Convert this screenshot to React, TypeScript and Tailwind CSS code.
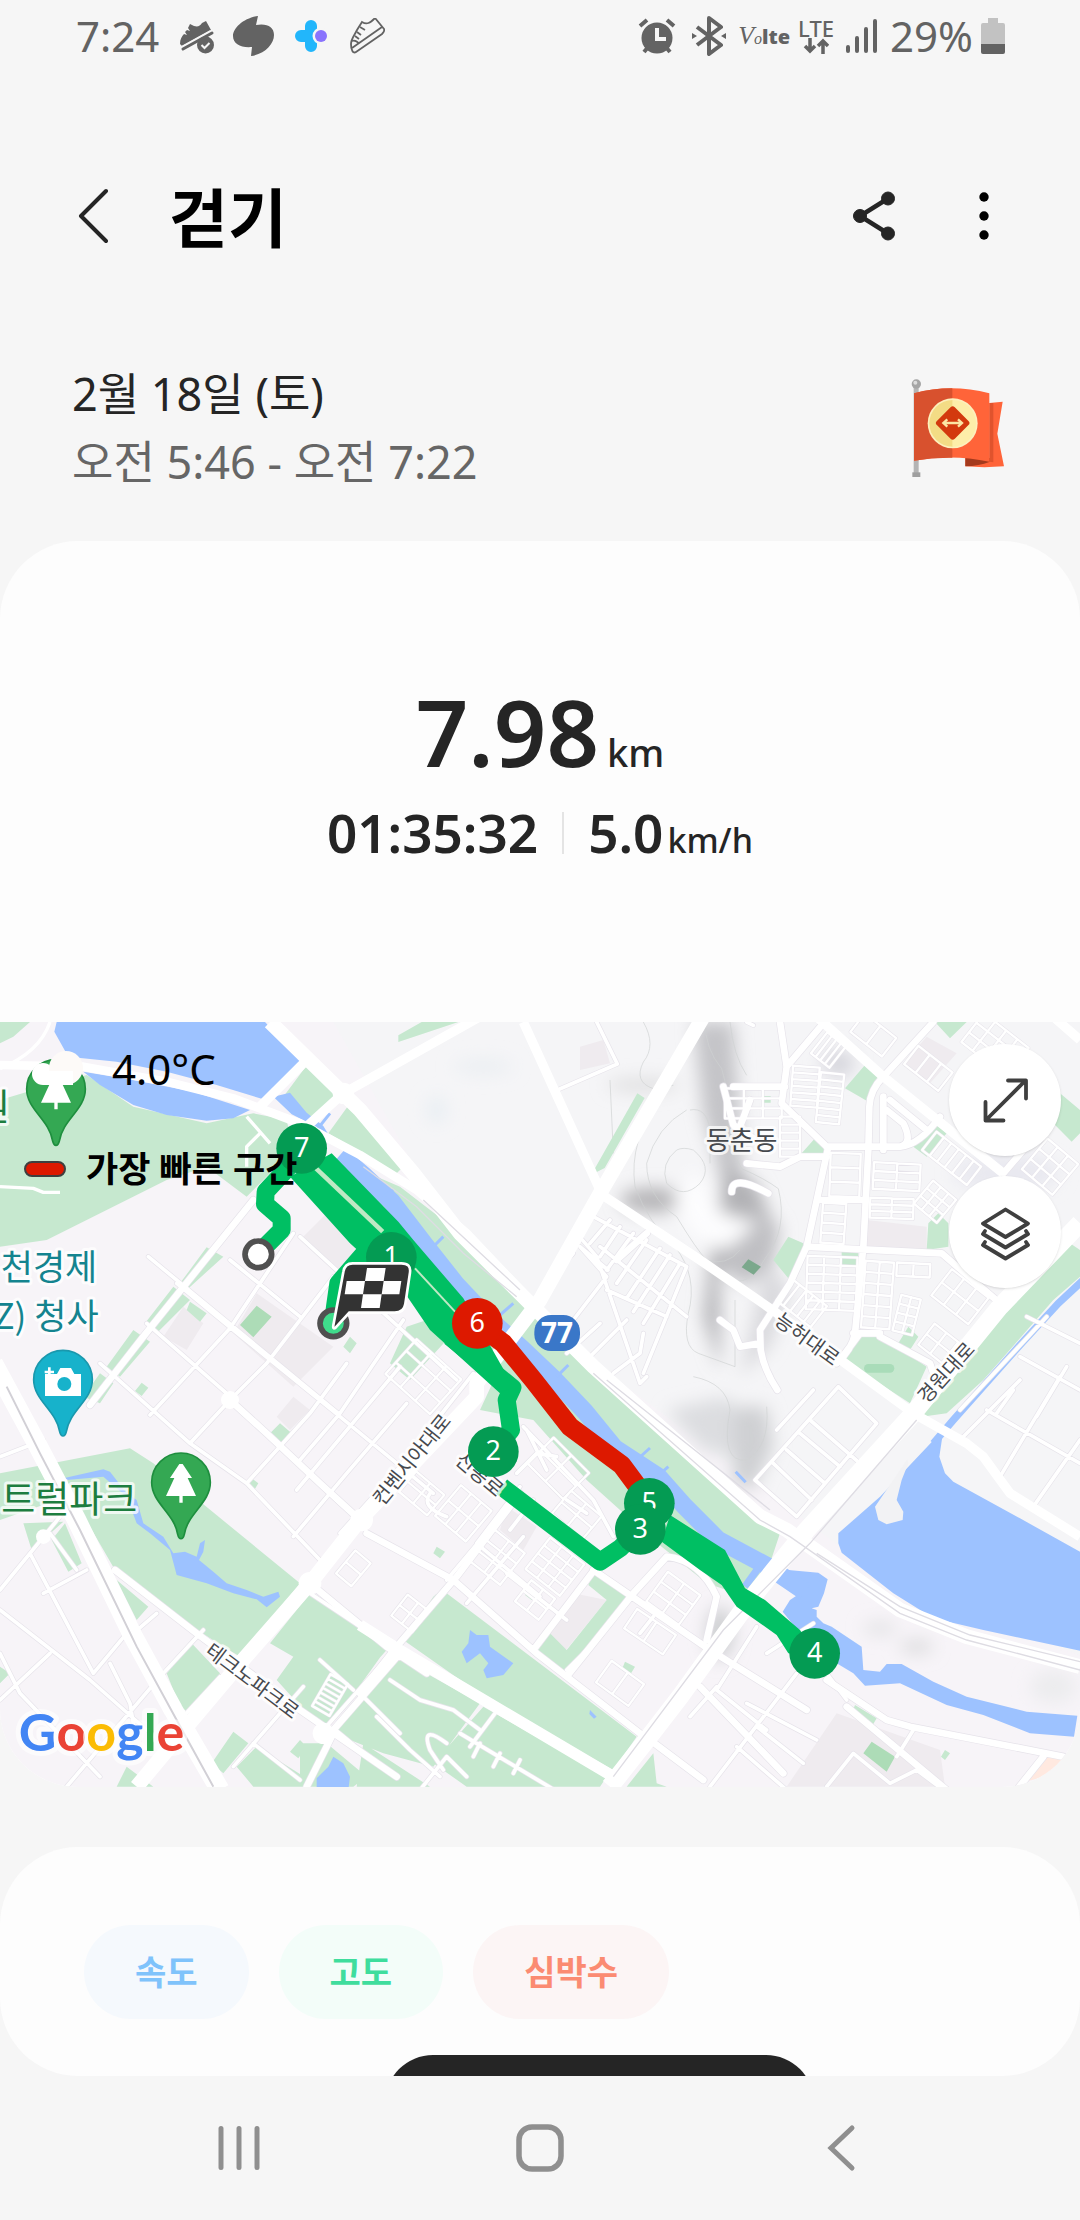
import type { ReactNode } from 'react'

const PARK = '#c6e8cf'
const WATER = '#9dc2ff'
const ROUTE = '#00bf63'
const MARKER = '#049b53'
const FAST = '#dd1900'

export default function App() {
  return (
    <div className="min-h-screen flex flex-col bg-[#f6f6f6] text-[#252525] font-['Noto_Sans','Noto_Sans_CJK_KR',sans-serif]">
      <StatusBar />
      <TitleBar />

      <section className="flex items-center justify-between mt-24 pl-[72px] pr-[73px] pb-[45px]">
        <div className="text-[45px] leading-[68px]">
          <p>2월 18일 (토)</p>
          <p className="text-[#666666]">오전 5:46 - 오전 7:22</p>
        </div>
        <FlagBadge />
      </section>

      <main>
        <section className="rounded-[78px] overflow-hidden bg-[#fdfdfd]">
          <Summary />
          <div className="relative">
            <RouteMap />
            <MapLegend />
            <div className="absolute top-[22px] right-[19px] flex flex-col gap-5">
              <MapButton label="지도 확대">
                <path d="M27 66 66 27M49 26.500h18v18M26.500 48v18.500h18" />
              </MapButton>
              <MapButton label="지도 레이어">
                <path d="M46.500 23.500 69 37.500 46.500 51 24 37.500z" />
                <path d="M26 45l-2 3 22.500 13.500L69 48l-2-3M26 56l-2 3 22.500 13.500L69 59l-2-3" />
              </MapButton>
            </div>
          </div>
        </section>

        <section className="relative mt-[60px] h-[229px] px-[84px] pt-[78px] rounded-[78px] overflow-hidden bg-[#fdfdfd]">
          <div className="flex gap-[30px]">
            <button className="h-[94px] px-[51px] rounded-full bg-[#f5f9fd] text-[#7fc3fb] text-[34px] font-bold">속도</button>
            <button className="h-[94px] px-[51px] rounded-full bg-[#f3fdf9] text-[#3fdd9d] text-[34px] font-bold">고도</button>
            <button className="h-[94px] px-[51px] rounded-full bg-[#fcf5f5] text-[#fb8b72] text-[34px] font-bold">심박수</button>
          </div>
          {/* top edge of the chart tooltip */}
          <div className="absolute left-[385px] top-[208px] w-[429px] h-24 rounded-full bg-[#252525]" />
        </section>
      </main>

      <NavBar />
    </div>
  )
}

function StatusBar() {
  return (
    <header className="flex items-center justify-between h-[72px] pl-[76px] pr-[75px] text-[42px] leading-[56px] text-[#636363]">
      <div className="flex items-center">
        <span>7:24</span>
        <svg className="ml-5 w-9 h-9" viewBox="0 0 36 36" fill="currentColor">
          <path d="M1 26c0-5 2-8 4-10l3 1-2-3 2-2 3 1-2-3 2-4 4 2c4 1 6 0 8-3l4-2 5 9L3 28z" />
          <path d="M4 31 33 15" stroke="#f6f6f6" strokeWidth="7" />
          <path d="M4 31 33 15" stroke="currentColor" strokeWidth="3" strokeLinecap="round" />
          <circle cx="26.500" cy="27" r="8.500" />
          <path d="m22.500 27 3 3 5-5" fill="none" stroke="#f6f6f6" strokeWidth="2" />
        </svg>
        <svg className="ml-4 w-[44px] h-[42px]" viewBox="0 0 44 42" fill="currentColor">
          <path d="M27 1c-14 2-25 12-25 20 0 8 8 12 19 11l-1 9c14-2 23-12 23-21 0-8-7-12-18-10z" />
        </svg>
        <svg className="ml-[18px] w-[36px] h-9" viewBox="0 0 36 36">
          <path d="M18 8v20M8 18h10" stroke="#22b6fb" strokeWidth="12" strokeLinecap="round" />
          <circle cx="28" cy="18" r="8.500" fill="#f6f6f6" />
          <circle cx="28" cy="18" r="6" fill="#8a73fd" />
        </svg>
        <svg className="ml-5 w-9 h-9" viewBox="0 0 36 36" fill="none" stroke="currentColor" strokeWidth="1.800">
          <path d="M2 26c0-5 3-8 6-14l5-8c5 3 8 1 13-4l9 11c1 2 0 3-2 5L7 34c-3 2-5-2-5-8z" />
          <path d="M3 30 33 9M3 23c3-1 5 0 7 3M8 14l4 3M11 9l5 3M6 18l4 3" />
        </svg>
      </div>

      <div className="flex items-center">
        <svg className="w-[38px] h-9" viewBox="0 0 38 36" fill="currentColor">
          <circle cx="19" cy="20" r="15.500" />
          <path d="m2 8 7-6M29 2l7 6M6 34l5-6M32 34l-5-6" stroke="currentColor" strokeWidth="4" />
          <path d="M19 10v11h9" fill="none" stroke="#f6f6f6" strokeWidth="4" />
        </svg>
        <svg className="ml-4 w-[34px] h-10" viewBox="0 0 34 40" fill="none" stroke="currentColor" strokeWidth="4" strokeLinejoin="round">
          <path d="M5 11l24 18-12 9V2l12 9L5 29" />
          <path d="M0 17v6l5-3zM34 17v6l-5-3z" fill="currentColor" stroke="none" />
        </svg>
        <span className="flex items-baseline ml-3 leading-none">
          <span className="font-['Liberation_Serif',serif] italic text-[26px]">V</span>
          <span className="font-['Liberation_Serif',serif] italic text-[16px]">o</span>
          <span className="text-[20px] font-black">lte</span>
        </span>
        <span className="flex flex-col items-center ml-2">
          <span className="text-[22px] leading-[20px] font-medium">LTE</span>
          <svg className="w-[26px] h-4" viewBox="0 0 26 16" fill="none" stroke="currentColor" strokeWidth="3.500">
            <path d="M7 0v13M2 8l5 5 5-5M20 16V3M15 8l5-5 5 5" />
          </svg>
        </span>
        <svg className="ml-3 w-8 h-9" viewBox="0 0 32 36" stroke="currentColor" strokeWidth="4" strokeLinecap="round">
          <path d="M2 33v-4M11 33V20M20 33V11M29 33V3" />
        </svg>
        <span className="ml-3">29%</span>
        <svg className="ml-2 w-6 h-9" viewBox="0 0 24 36">
          <path d="M7 0h10v5h5q2 0 2 2v19H0V7q0-2 2-2h5z" fill="#c2c2c2" />
          <path d="M0 26h24v8q0 2-2 2H2q-2 0-2-2z" fill="#636363" />
        </svg>
      </div>
    </header>
  )
}

function TitleBar() {
  return (
    <div className="flex items-center mt-24 h-24 pl-[76px] pr-[82px]">
      <button aria-label="뒤로" className="w-8 h-14">
        <svg viewBox="0 0 32 56" fill="none" stroke="#252525" strokeWidth="4" strokeLinecap="round" strokeLinejoin="round">
          <path d="M30 3 5 28l25 25" />
        </svg>
      </button>
      <h1 className="ml-[61px] pt-1 text-[64px] leading-[96px] font-bold text-black">걷기</h1>
      <button aria-label="공유" className="ml-auto w-[46px] h-[52px]">
        <svg viewBox="0 0 46 52" fill="#252525" stroke="#252525">
          <path d="M37 8.500 9 26l28 17.500" fill="none" strokeWidth="4.500" />
          <circle cx="37" cy="8.500" r="6.500" />
          <circle cx="9" cy="26" r="6.500" />
          <circle cx="37" cy="43.500" r="6.500" />
        </svg>
      </button>
      <button aria-label="더보기" className="ml-[75px] w-[26px] h-[52px]">
        <svg viewBox="0 0 26 52" fill="#000">
          <circle cx="12" cy="7" r="4.700" />
          <circle cx="12" cy="26" r="4.700" />
          <circle cx="12" cy="45" r="4.700" />
        </svg>
      </button>
    </div>
  )
}

function FlagBadge() {
  return (
    <svg className="w-[97px] h-[100px]" viewBox="150 80 291 300">
      <path d="M161 100h15v270h-15z" fill="#b4b4b4" />
      <path d="M157 363h24v14h-24z" fill="#9f9f9f" />
      <circle cx="169" cy="98" r="14" fill="#a5a5a5" />
      <circle cx="166" cy="94" r="6" fill="#dcdcdc" />
      <path d="M316 320h72V155l40-4-16 96 20 98q-60 5-116 0z" fill="#ff6439" />
      <path d="M388 155h12v178l-12-2z" fill="#e0532d" />
      <path d="M316 320h72v12q-30 12-72 13z" fill="#a43a1d" />
      <path d="M162 126q110-30 226 0v205q-110-24-226-3z" fill="#ff6439" />
      <path d="M162 126q56-15 115-15v208q-60-1-115 9z" fill="#d8512e" />
      <circle cx="278" cy="216" r="75" fill="#fdf0bd" />
      <path d="M278 146a70 70 0 0 0 0 140z" fill="#f3dc85" />
      <path d="M278 146a70 70 0 0 1 0 140z" fill="#fdeea9" />
      <rect x="240" y="177" width="76" height="76" rx="9" transform="rotate(45 278 215)" fill="#d33a0e" />
      <path d="M252 215h52M262 204l-12 11 12 11M294 204l12 11-12 11" fill="none" stroke="#fbe6a4" strokeWidth="7" />
    </svg>
  )
}

function Summary() {
  return (
    <div className="flex flex-col items-center pt-[143px] pb-[159px] gap-[23px] font-semibold">
      <p className="flex items-baseline gap-2">
        <span className="text-[92px] leading-[96px]">7.98</span>
        <span className="text-[38px] leading-[40px] font-medium">km</span>
      </p>
      <div className="flex items-center">
        <span className="text-[53px] leading-[60px]">01:35:32</span>
        <span className="mx-6 w-[2px] h-[42px] bg-[#e4e4e4]" />
        <p className="flex items-baseline gap-1">
          <span className="text-[53px] leading-[60px]">5.0</span>
          <span className="text-[34px] leading-[40px] font-medium">km/h</span>
        </p>
      </div>
    </div>
  )
}

function MapLegend() {
  return (
    <div className="absolute left-6 top-[23px] flex flex-col gap-[52px] text-black">
      <div className="flex items-center h-12">
        <svg className="ml-2 w-[52px] h-9" viewBox="0 0 52 36" fill="#fff">
          <circle cx="11" cy="23" r="11" />
          <circle cx="34" cy="17" r="17" fill="#fdfaf8" />
          <path d="M11 20h30v14H11z" />
        </svg>
        <span className="ml-7 text-[42px] leading-[48px]">4.0°C</span>
      </div>
      <div className="flex items-center h-12">
        <span className="w-[42px] h-4 rounded-full border-2 border-[#3f3f3f] bg-[#dd1900]" />
        <span className="ml-5 text-[35px] leading-[48px] font-bold">가장 빠른 구간</span>
      </div>
    </div>
  )
}

function MapButton({ label, children }: { label: string; children: ReactNode }) {
  return (
    <button aria-label={label} className="flex items-center justify-center w-28 h-28 rounded-full bg-white shadow-sm">
      <svg className="w-[93px] h-[93px]" viewBox="0 0 93 93" fill="none" stroke="#3f3f3f" strokeWidth="3.800" strokeLinecap="round" strokeLinejoin="round">
        {children}
      </svg>
    </button>
  )
}

function NavBar() {
  return (
    <nav className="grid grid-cols-3 items-center justify-items-center h-36 px-[88px] text-[#8f8f8f]">
      <button aria-label="최근 앱">
        <svg className="w-12 h-12" viewBox="0 0 48 48" stroke="currentColor" strokeWidth="5" strokeLinecap="round">
          <path d="M6 4.500v39M24 4.500v39M42 4.500v39" />
        </svg>
      </button>
      <button aria-label="홈">
        <svg className="w-12 h-12" viewBox="0 0 48 48" fill="none" stroke="currentColor" strokeWidth="5.500">
          <rect x="3" y="3" width="42" height="42" rx="13" />
        </svg>
      </button>
      <button aria-label="뒤로 가기">
        <svg className="w-12 h-12" viewBox="0 0 48 48" fill="none" stroke="currentColor" strokeWidth="5" strokeLinecap="round">
          <path d="M35 4 14 24l21 20" />
        </svg>
      </button>
    </nav>
  )
}

type Block = { x: number; y: number; w: number; h: number; cols: number; rows: number; angle?: number }

// residential blocks, drawn as small street grids
const BLOCKS: Block[] = [
  { x: 2375, y: 200, w: 80, h: 120, cols: 1, rows: 6, angle: 4 },
  { x: 2455, y: 220, w: 70, h: 150, cols: 1, rows: 7, angle: 6 },
  { x: 2340, y: 350, w: 60, h: 120, cols: 1, rows: 5 },
  { x: 2450, y: 110, w: 70, h: 80, cols: 4, rows: 1, angle: 38 },
  { x: 2490, y: 460, w: 90, h: 130, cols: 1, rows: 3, angle: 2 },
  { x: 2620, y: 490, w: 140, h: 80, cols: 2, rows: 3, angle: 3 },
  { x: 2610, y: 595, w: 130, h: 60, cols: 2, rows: 3, angle: 2 },
  { x: 2465, y: 610, w: 70, h: 120, cols: 1, rows: 4, angle: 4 },
  { x: 2420, y: 770, w: 150, h: 160, cols: 3, rows: 6, angle: 2 },
  { x: 2590, y: 785, w: 85, h: 200, cols: 2, rows: 6, angle: 4 },
  { x: 2690, y: 790, w: 100, h: 40, cols: 2, rows: 1, angle: 3 },
  { x: 2690, y: 890, w: 60, h: 110, cols: 2, rows: 4, angle: 14 },
  { x: 2340, y: 870, w: 130, h: 80, cols: 5, rows: 1, angle: 38 },
  { x: 2770, y: 440, w: 170, h: 70, cols: 6, rows: 1, angle: 38 },
  { x: 2760, y: 560, w: 90, h: 90, cols: 3, rows: 3, angle: 40 },
  { x: 2810, y: 840, w: 140, h: 100, cols: 3, rows: 2, angle: 38 },
  { x: 2770, y: 990, w: 90, h: 80, cols: 2, rows: 2, angle: 38 },
  { x: 2720, y: 170, w: 130, h: 70, cols: 3, rows: 1, angle: 38 },
  { x: 2560, y: 70, w: 120, h: 70, cols: 2, rows: 1, angle: 38 },
  { x: 2900, y: 80, w: 170, h: 110, cols: 4, rows: 3, angle: 38 },
  { x: 3090, y: 440, w: 120, h: 120, cols: 3, rows: 3, angle: 40 },
  { x: 2175, y: 265, w: 170, h: 90, cols: 3, rows: 3 },
  { x: 1210, y: 1440, w: 110, h: 80, cols: 2, rows: 2, angle: 40 },
  { x: 1330, y: 1480, w: 120, h: 120, cols: 3, rows: 2, angle: 40 },
  { x: 1430, y: 1610, w: 120, h: 120, cols: 3, rows: 2, angle: -52 },
  { x: 1600, y: 1640, w: 130, h: 120, cols: 3, rows: 4, angle: 38 },
  { x: 1560, y: 1760, w: 90, h: 80, cols: 2, rows: 2, angle: 38 },
  { x: 1190, y: 1800, w: 80, h: 80, cols: 2, rows: 2, angle: -52 },
  { x: 1670, y: 1500, w: 120, h: 90, cols: 2, rows: 2, angle: 40 },
  { x: 1600, y: 1350, w: 150, h: 110, cols: 2, rows: 2, angle: 45 },
  { x: 1960, y: 1740, w: 120, h: 110, cols: 2, rows: 3, angle: 36 },
  { x: 1880, y: 1860, w: 140, h: 70, cols: 2, rows: 1, angle: 34 },
  { x: 1800, y: 2010, w: 120, h: 80, cols: 2, rows: 1, angle: 36 },
  { x: 960, y: 2030, w: 60, h: 110, cols: 1, rows: 7, angle: 30 },
  { x: 1030, y: 1660, w: 60, h: 90, cols: 1, rows: 2, angle: 40 },
  { x: 1180, y: 1060, w: 180, h: 140, cols: 3, rows: 3, angle: 42 },
]

function gridPath({ x, y, w, h, cols, rows }: Block) {
  let d = ''
  for (let c = 0; c <= cols; c++) d += `M${x + (w * c) / cols} ${y}v${h}`
  for (let r = 0; r <= rows; r++) d += `M${x} ${y + (h * r) / rows}h${w}`
  return d
}

const MINOR_ROADS =
  'M2240 66l20 10M1790 66l62 126-180 78M1015 1240l-570-470M530 850l170 140 320 260 280 230M440 970l240 210M300 1090l270 240M900 710l470 430M690 780l210 170M1200 1100l-310 370' +
  'M880 700 690 985l-240 260M1000 830 800 1090 690 1200M1210 960 1020 1240 900 1380M1420 1120 1200 1400 1020 1600M690 1200l110 100 220 210 70 60M570 1330l170 120 220 230M570 1330l120-130M740 1450l190-210 110-150M880 1610l160-190 180-210' +
  'M0 1370l130-50M0 1770l180-220M90 1660l190 360M150 1600l80 110M0 1830l270 210 170 150M130 1780l130-70M0 2100l150-140M280 2020l100-120M200 2360l280-330M0 1960l60 120 240 250M400 1900l70-60M490 2020l120-130M540 2160l120-130' +
  'M330 1990l60 120 10 60M700 2300l210-240M760 2230l140 110M930 1780l270 180M970 2190l230-260M1200 1960l-120 120 120 120M960 1980l100 90' +
  'M1730 700l60 70 130 380 20-20M1780 650l280 150-130 320M1830 660l-60 70M1860 680l-60 90M1900 700l-80 110M1940 720l-90 130M1980 745l-100 150M2010 765l-110 170M2040 790l-110 180M1800 740l260 210M1740 740l84 70M1820 870l180 80M1640 850l80-90M1740 740l80 90-100 130M1700 1060l100-90M1750 1090l130-130M1840 1120l80-60 10-60' +
  'M2515 1160l115 110-240 280-125-110zM2430 1260l150 130M2400 1300l120 100M2360 1350l115 100M2320 1390l115 110M2440 1170l-110 120' +
  'M2880 1320l180-180M3000 1430l180-300M3100 1520l140-200M2960 1230l280 160M2990 1240l50-70M3080 950l160 80M3140 950l-260 280M3200 1100l-90 150M3060 1070l180 100' +
  'M2300 1960l140-90M2150 2060l-80 90M2270 1880l-120 190 150 120M2390 2020l-260 340M2240 2110l210 110M2270 2180l140 110M2210 2240l150 130M2480 2020l60 80M2740 2190l-50 80M2480 2360l80-100 110 90 80-40 80 60' +
  'M1500 2120l-90 120M1380 2200l300 180M1440 2230l-20 40M1500 2260l-20 40M1560 2280l-20 40M1340 2230q-80-60-50 20l40 60M1170 2040l90 60 100 30 80 60M1130 2150l100 100 90 80M1400 2330l-60-60-80 100' +
  'M1110 1540l60-50M1290 1480q-30 40 50 70M1920 1900l40-50M1700 2010l80-80M1600 1500l-70 90M1560 1460l-130 170 190 160M1340 1740l160-190M1400 1810l170-200M1520 1720l180 140M1550 1420l60-60 60 10M1570 1280l210 220 60 110M1580 1290l60 120M1700 1500l60 40'

const MID_ROADS =
  'M2340 66l20 134-15 110 135 130M2200 260h155M2170 260l30 115 60 40M2305 580q-110-60-110-5M2240 490l100 10 60-30h80M2360 200l110-130M2800 66 2650 230q-40 40-42 90l-3 130-15 290-25 260q-10 50-55 90' +
  'M2480 440h220q60-5 120-90M2485 440 2420 740 2370 850l-90 140 2 60q10 60 50 120M2420 740l405 20 175 150M2460 600h130M2650 290v160M2660 330l50 40q30 60-10 70M2670 300l110 90M2640 1010l150 80 10 30M2560 1000h80M3010 520l60-70M2520 1080l60-80' +
  'M2160 960l40 30 20 50 60-10M2250 300l-30 80' +
  'M270 1215 430 1010l330-410M345 1710l245 190 310 230 160 110 130 90M1100 1600l260 140 250 220 310 240M1600 1950l190-250M1700 2030l200-250 100-110q100 10 150 120l-30 130M1080 2080l110-140 180-210 190-250M1780 1710l350 240 290 180M1080 1560l-120-110-160-150-110-100M930 1750l230 190 120 80M2480 2040l180 120 70 20 460 90M2540 2120l300 250M1080 1560l-90 110M3130 2270l-80 100M1950 2220l160 120M2100 2060l250 260M1850 780l90-80M1000 2200l-80 160M1060 2240l-60-50 200-230'

function RouteMap() {
  return (
    <svg className="block w-full h-auto" viewBox="0 66 3240 2295" role="img" aria-label="걷기 경로 지도">
      <defs>
        <filter id="soft" x="-50%" y="-50%" width="200%" height="200%">
          <feGaussianBlur stdDeviation="26" />
        </filter>
      </defs>
      <rect y="66" width="3240" height="2295" fill="#f7f4f8" />
      <path d="M1000 66h2240v1900L2600 1700l-800-600-500-500z" fill="#f5f5f7" />

      {/* hills */}
      <g filter="url(#soft)">
        <path d="M2080 66h120l20 300 10 160-60 40-60-220z" fill="#c4c4c8" />
        <ellipse cx="1960" cy="600" rx="100" ry="38" fill="#b6b5b8" />
        <ellipse cx="1930" cy="255" rx="110" ry="20" fill="#dededf" />
        <path d="M2180 500l90 50 50 120-60 90-100 50v300l-50-160 30-260z" fill="#b2b2b6" />
        <path d="M2260 620l80 60-20 120-90 60-60-60z" fill="#bfbfc3" />
        <path d="M2020 600q60 140 160 150l90-80-100-30-90-130z" fill="#fdfdfe" />
        <path d="M2300 780l70 90-60 170-90 90z" fill="#d9d9dd" />
        <path d="M2000 1230l180-40 60 90-40 90-90-20z" fill="#dcdde0" />
        <path d="M2200 1220h100l20 120-60 130-60-20z" fill="#cfd0d3" />
        <ellipse cx="2515" cy="190" rx="50" ry="40" fill="#d5d5dc" />
        <ellipse cx="2750" cy="1940" rx="50" ry="20" fill="#dadadc" />
        <ellipse cx="2640" cy="1885" rx="50" ry="20" fill="#e2e2e4" />
        <ellipse cx="3160" cy="2060" rx="70" ry="50" fill="#ececee" />
        <ellipse cx="1450" cy="200" rx="90" ry="22" fill="#eaeef2" />
        <ellipse cx="1310" cy="330" rx="30" ry="40" fill="#e8eef3" />
        <ellipse cx="3020" cy="520" rx="160" ry="60" fill="#e9e9f0" />
        <ellipse cx="2160" cy="1900" rx="40" ry="80" fill="#cdcfd1" />
      </g>
      <g fill="none" stroke="#cfd2d2" strokeWidth="2">
        <path d="M2115 66q0 80 50 140 30 90 20 220l40 80q70 30 110 60 30 120-40 210-50 90-110 60M2190 66q10 100 50 160M1930 66q40 70 0 120-30 60 30 80l60-10M2070 330q50-10 60 60v100M2060 330q-90 50-120 160 0 100 90 160 60 100 90 130 60 20 100-30" />
        <path d="M2030 450q-50 40-30 100 50 50 100 0 40-50-20-100-30-10-50 0zM1830 240l10 220M1985 290q-100 130-80 270 40 110 120 180 70 90 40 200-20 100 30 120l110 40V900M2080 1130q100 20 110 100-30 160 50 150 70-40 60-160" />
      </g>

      {/* built-up plots */}
      <g fill="#efebef">
        <path d="M770 880l230 160-120 120-180-160zM980 640l100 80-60 110-120-110zM550 920l60 50-50 80-70-40zM880 1190l50 40-60 60-40-40z" />
        <path d="M1720 1780l100 20-130 160-55-50zM1520 1520l90 60-40 70-70-60zM2510 2140l310 110 15 110h-475zM1740 140l70-20 20 70-90 20zM2600 660l180 20v70l-190-10zM2780 110l90 50-80 90-80-60z" />
      </g>

      <g fill={PARK}>
        <path d="M0 66h90l-50 44-40 20zM0 300l100-30 160-45 140 95 220 50 140-30 100 20 20 90-140 140-120-90-120 40-360 180-140 20zM925 190l75 70 10 30-75 80-75-50-10-30zM1050 310l60 60 100 130-20 20-110-65-95-55z" />
        <path d="M1060 500 1200 560 1420 730 1600 930 1760 1100 1960 1260 2340 1600 2310 1690 2240 1790 2120 1750 1960 1620 1760 1440 1600 1260 1440 1230 1500 1100 1300 900 1100 760z" />
        <path d="M1220 980l60-20 60 60-110 120-60-50zM620 742l50 28-110 100-20-20zM520 860l50 40-100 100-35-30zM400 990l50 35-90 105-40-30zM300 1120l40 30-40 60-50-20zM570 905l50 35-20 25-40-35zM1050 1010l20 20-20 30-20-20zM425 1148l20 15-20 25-20-15zM840 1270l35 30-30 30-35-30zM755 1435l20 15-15 25-20-15z" />
        <path d="M0 1420l390-75 70 45 440 360-180 220-130-80-150-100-95-80-75-130-70-90-200 70zM70 1570l120-5-95 85zM195 1570l50 120-40 25-50-95zM350 1740l95 80-35 40zM575 1930l85 90-90 120-30-20-40-100zM700 2195l45 35-75 90-35-30zM0 2000l30 20-30 30z" />
        <path d="M930 1780l230 165-90 125-100 115-50-45-90-100 50-70-70-40zM1340 1780q-20-10-40 10l-90 130 270 190 360 200 70-100zM1190 1970l250 140-140 190-150-40-150-60 110-140zM1450 2120l370 210-20 30h-400l-100-70zM710 2300l60-60 190 120H760zM900 2230h80l120 100-40 30H900zM1080 1890l80 60-80 90zM1090 2230l200 130h-220zM380 2300l80 60h-110zM900 2220l20 20-25 35-25-20z" />
        <path d="M1780 1720l100 70-180 230-90-65 40-55 50 50 120-150-55-45zM1960 2260l10 90 30 10h-120zM1310 1640l25 15-15 20-20-15zM1590 1765l20 15-15 20-20-15zM1875 1985l30 15-15 25-25-15z" />
        <path d="M2595 195l50 40-40 70-70-40zM2445 415l35 25-5 25-70-5zM2805 370l35 30-60 70-40-30zM2805 66h95l-50 49zM3180 280l60 50v70l-25 25-55-55zM2815 640l30 30v70l-65 10 5-80zM2580 1000l65 10 135 90-50 110-200-130zM2725 980l30 30-25 40-35-20zM2365 710l45 20-10 70-35 35-45-55zM2525 750h50v45h-50zM2286 288h26v20h-26z" />
        <path d="M3210 730l30 20v80l-80 70-210 240-110 100-75 10 35-50 200-250zM1265 66h110l-180 60v-20zM1912 280l22 14-120 210-40 20zM2565 2115l65 40-15 25-60-40zM2835 2250l15 10-15 20-12-10z" />
      </g>
      <path d="M770 917l45 33-55 62-40-37zM2615 2225l70 45-25 45-70-55z" fill="#addcb7" />
      <path d="M2245 778l38 22-22 24-36-22z" fill="#7ba88c" />
      <path d="M2605 1105h65" stroke="#a9dcb9" strokeWidth="26" strokeLinecap="round" />
      <path d="M3120 2270h70q-20 60-120 75z" fill="#ffe9e0" />

      <g fill={WATER}>
        <path d="M170 66l-7 29 42 75 145 15 150 30 150 40 140 43 25-8 90-105L795 66zM250 215l150 25 180 35 170 55-50 25-80 7-120-17-100-30-100-60zM820 290l50-12 50 60 50 40 15 25-30-20-80-40z" />
        <path d="M190 1435l120-27 20 7 50 65 30 20 20 70 60 40 30 50 35-5 35 15 10-40 15-10-5 35-13 25 43 35 40 35 60 20 50 20 45-15 5 15-40 32-30-24-70-18-80-30-90-25-20-75-60-50-40-30-30-80-70-60-110 10z" />
        <path d="M1410 1890l20 15h35l5 35 70 50-30 35-50 10-10-25 15-20-25-30-40 30-15-35 20-25zM1000 2270l30 20 20 40-5 40h-95v-35l35-35zM1770 2130l20 20-8 6-14-14z" />
        <path d="M2340 1740l25-30 90 8 28 20-11 42-17 40-20 5 15 5v20l20 20 25 10 90 60 5 70 50 5 20-23h45l95 53 100 45 100 25 80 20 152 12-10 63-132-10-140-55-110-30-140-65-105 7-35-37-50-30-110-90-52-65 22-35 42-28z" />
        <path d="M2820 1300 2640 1490 2515 1600v30l10 28 155 122 120 75 150 35 290 62v-297l-180-100-200-110-25-25-17-50 9-60z" />
      </g>
      <path d="M2722 1378l-42 62-55 80 10 40 25 13 48-13 2-25-20-35 15-60 20-50z" fill="#f2f2f4" />
      <g fill="none" stroke={WATER}>
        <path d="M1020 465l70 60 85 80 100 130 95 120 95 100 100 90 95 90 95 100 90 110 130 85 80 90 100 100 150 80 110 75" strokeWidth="54" />
        <path d="M2285 1690l-50 70M3250 840l-75 70-115 125-200 225-60 70" strokeWidth="22" />
        <path d="M1150 590l30-20M1290 750l40-40M1500 945l40-35M1670 1130l35-35M1910 1380l40-36M1960 1440l45-40M2207 1415l30 32M950 390l40-50" strokeWidth="9" />
      </g>

      {/* streets */}
      <g fill="none" strokeLinecap="round" strokeLinejoin="round">
        <g stroke="#e6e3ea">
          {BLOCKS.map((b, i) => (
            <path key={i} d={gridPath(b)} strokeWidth="10" transform={`rotate(${b.angle ?? 0} ${b.x + b.w / 2} ${b.y + b.h / 2})`} />
          ))}
          <path d={MINOR_ROADS} strokeWidth="15" />
          <path d={MID_ROADS} strokeWidth="24" />
        </g>
        <g stroke="#fff">
          {BLOCKS.map((b, i) => (
            <path key={i} d={gridPath(b)} strokeWidth="7" transform={`rotate(${b.angle ?? 0} ${b.x + b.w / 2} ${b.y + b.h / 2})`} />
          ))}
          <path d={MINOR_ROADS} strokeWidth="11" />
          <path d={MID_ROADS} strokeWidth="20" />
        </g>
      </g>
      <g fill="none" stroke="#fff" strokeLinejoin="round">
        <path d="M0 195l250 5 250 45 200 50 200 75 180 95 170 105 150 130 190 200" strokeWidth="26" />
        <path d="M150 66q-30 90-150 140M740 350l70 80M780 400l-40 40v60M0 560l100 5 30 12h50" strokeWidth="10" />
        <path d="M810 66l270 264 160 190 140 180 180 180 220 220 500 450 80 40 340 240 200 80 340 90" strokeWidth="44" />
        <path d="M1030 280 1440 50M925 375l105-95M780 320l140-140M1570 66l230 504" strokeWidth="28" />
        <path d="M2110 50 1800 580l-180 320-190 250v40l-350 370-150 190-210 240-160 190-150 180" strokeWidth="44" />
        <path d="M1800 580l300 200 210 145 430 315 160 90 50 40 80 110 210 130M2450 50l200 180 360 290M3160 50l80 70" strokeWidth="28" />
        <path d="M3240 670 3000 920l-260 320-320 350-170 210-210 290-100 130-110 140" strokeWidth="54" />
        <path d="M1080 1875l110 70 650 385" strokeWidth="34" />
        <path d="M-20 1090l130 240 120 230 170 350 120 220 140 240" strokeWidth="58" />
      </g>
      <g fill="#fff">
        <circle cx="1030" cy="280" r="32" />
        <circle cx="690" cy="1200" r="27" />
        <circle cx="1085" cy="1560" r="34" />
        <circle cx="930" cy="1750" r="34" />
        <circle cx="970" cy="2200" r="32" />
        <circle cx="130" cy="1610" r="22" />
      </g>
      <g fill="none" stroke="#dedce3" strokeWidth="4">
        <path d="M20 1160l100 200 120 230 170 350 120 220 110 200" stroke="#d2d0d6" strokeWidth="6" />
        <path d="M1090 500l160 120 140 140 160 130M1270 600l290 270M1780 1120l500 440 90 50 330 230 200 80 340 90M2750 1260l-320 370-260 260-330 440" />
        <path d="M1820 1140l490 390M2450 1660l250 160 210 85 330 80" />
      </g>

      {/* walked route */}
      <g fill="none" stroke={ROUTE} strokeWidth="54" strokeLinejoin="round">
        <path d="M785 750l60-60v-35l-50-43 2-37 70-75M1110 740l-95 110-10 70-5 40M1350 1010l187 153-17 37 13 90-53 65M1505 1460l295 225 60-40 60-60" />
      </g>
      <g fill={ROUTE}>
        <path d="M870 530l125-70 200 205 45 55 150 175 150 265-40 20-210-190-75-110-165-150zM1985 1625l25-80 165 105 60 115 60 35 105 90 45 70h-80l-35-55-120-85-45-65-65-45z" />
      </g>
      <path d="M948 505l200 190" stroke="#bfe9c4" strokeWidth="14" />
      <path d="M1245 805l120 130" stroke="#bfe9c4" strokeWidth="6" />
      <path d="M1430 970l80 60 90 110 110 140 155 115 85 115" fill="none" stroke={FAST} strokeWidth="58" strokeLinejoin="round" />

      {/* place labels */}
      <g className="font-['Noto_Sans_CJK_KR',sans-serif]" stroke="#fff" strokeOpacity=".75" strokeWidth="18" strokeLinejoin="round" paintOrder="stroke">
        <g textAnchor="end" fontSize="105" fill="#14848f">
          <text x="292" y="840">천경제</text>
          <text x="296" y="988">Z) 청사</text>
        </g>
        <g textAnchor="end" fontSize="111" fill="#1d7d3f">
          <text x="412" y="1540">트럴파크</text>
          <text x="30" y="362">원</text>
        </g>
        <text x="2225" y="450" fontSize="78" textAnchor="middle" fill="#46494e">동춘동</text>
        <g fontSize="60" textAnchor="middle" fill="#46494e">
          <text transform="translate(1252 1392) rotate(-51)">컨벤시아대로</text>
          <text transform="translate(744 2060) rotate(37)">테크노파크로</text>
          <text transform="translate(2409 1035) rotate(36)">능허대로</text>
          <text transform="translate(2854 1132) rotate(-48)">경원대로</text>
          <text transform="translate(1425 1440) rotate(40)">신송로</text>
        </g>
      </g>

      <rect x="1603" y="945" width="137" height="108" rx="50" fill="#3a77c8" />
      <text x="1671" y="1029" fontSize="84" fontWeight="700" textAnchor="middle" fill="#fff">77</text>

      <Pin x={168} y={268} fill="#34a853" edge="#1e8e3e"><Tree /></Pin>
      <Pin x={543} y={1448} fill="#34a853" edge="#1e8e3e"><Tree /></Pin>
      <Pin x={189} y={1140} fill="#17b2cb" edge="#1a98ad">
        <path d="M-54-18h36l10-18h32l10 18h20v66H-54z" fill="#fff" />
        <path d="M-41-38v28M-55-24h28" stroke="#fff" strokeWidth="8" />
        <circle cx="4" cy="12" r="21" fill="#17b2cb" />
      </Pin>

      <Marker x={905} y={445} n={7} />
      <Marker x={1174} y={772} n={1} />
      <Marker x={1480} y={1355} n={2} />
      <Marker x={1948} y={1510} n={5} />
      <Marker x={1921} y={1588} n={3} />
      <Marker x={2444} y={1960} n={4} />
      <Marker x={1432} y={970} n={6} fill={FAST} />

      <circle cx="775" cy="763" r="40" fill="#fff" stroke="#505050" strokeWidth="17" />
      <circle cx="1000" cy="970" r="40" fill="#3fdc8b" stroke="#505050" strokeWidth="17" />
      <path d="M1058 790h146q30 0 26 28l-14 94q-4 26-32 26h-136l-42 46q-8 4-6-8l30-160q4-26 28-26z" fill="#333" stroke="#fff" strokeWidth="8" />
      <path d="M1101 804h56l-6 39h-56zM1040 843h55l-6 40h-55zM1151 843h53l-6 40h-53zM1089 883h56l-6 41h-56z" fill="#fff" />

      <text x="56" y="2252" fontSize="156" fontWeight="700" className="font-['Lato',sans-serif]" stroke="#fff" strokeOpacity=".6" strokeWidth="30" strokeLinejoin="round" paintOrder="stroke">
        <tspan fill="#4285f4">G</tspan>
        <tspan fill="#ea4335">o</tspan>
        <tspan fill="#fbbc04">o</tspan>
        <tspan fill="#4285f4">g</tspan>
        <tspan fill="#34a853">l</tspan>
        <tspan fill="#ea4335">e</tspan>
      </text>
    </svg>
  )
}

function Marker({ x, y, n, fill = MARKER }: { x: number; y: number; n: number; fill?: string }) {
  return (
    <g>
      <circle cx={x} cy={y} r="76" fill={fill} />
      <text x={x} y={y + 26} fontSize="81" textAnchor="middle" fill="#fff">{n}</text>
    </g>
  )
}

function Pin({ x, y, fill, edge, children }: { x: number; y: number; fill: string; edge: string; children: ReactNode }) {
  return (
    <g transform={`translate(${x} ${y})`}>
      <path
        d="M0-89a88 88 0 0 1 88 88c0 62-68 92-78 156q-3 13-10 13t-10-13C-20 91-88 61-88-1A88 88 0 0 1 0-89z"
        fill={fill}
        stroke={edge}
        strokeWidth="5"
      />
      {children}
    </g>
  )
}

function Tree() {
  return <path d="M-5-56h10l28 42H20l25 54H5v20H-5V40h-40l25-54h-13z" fill="#fff" />
}
